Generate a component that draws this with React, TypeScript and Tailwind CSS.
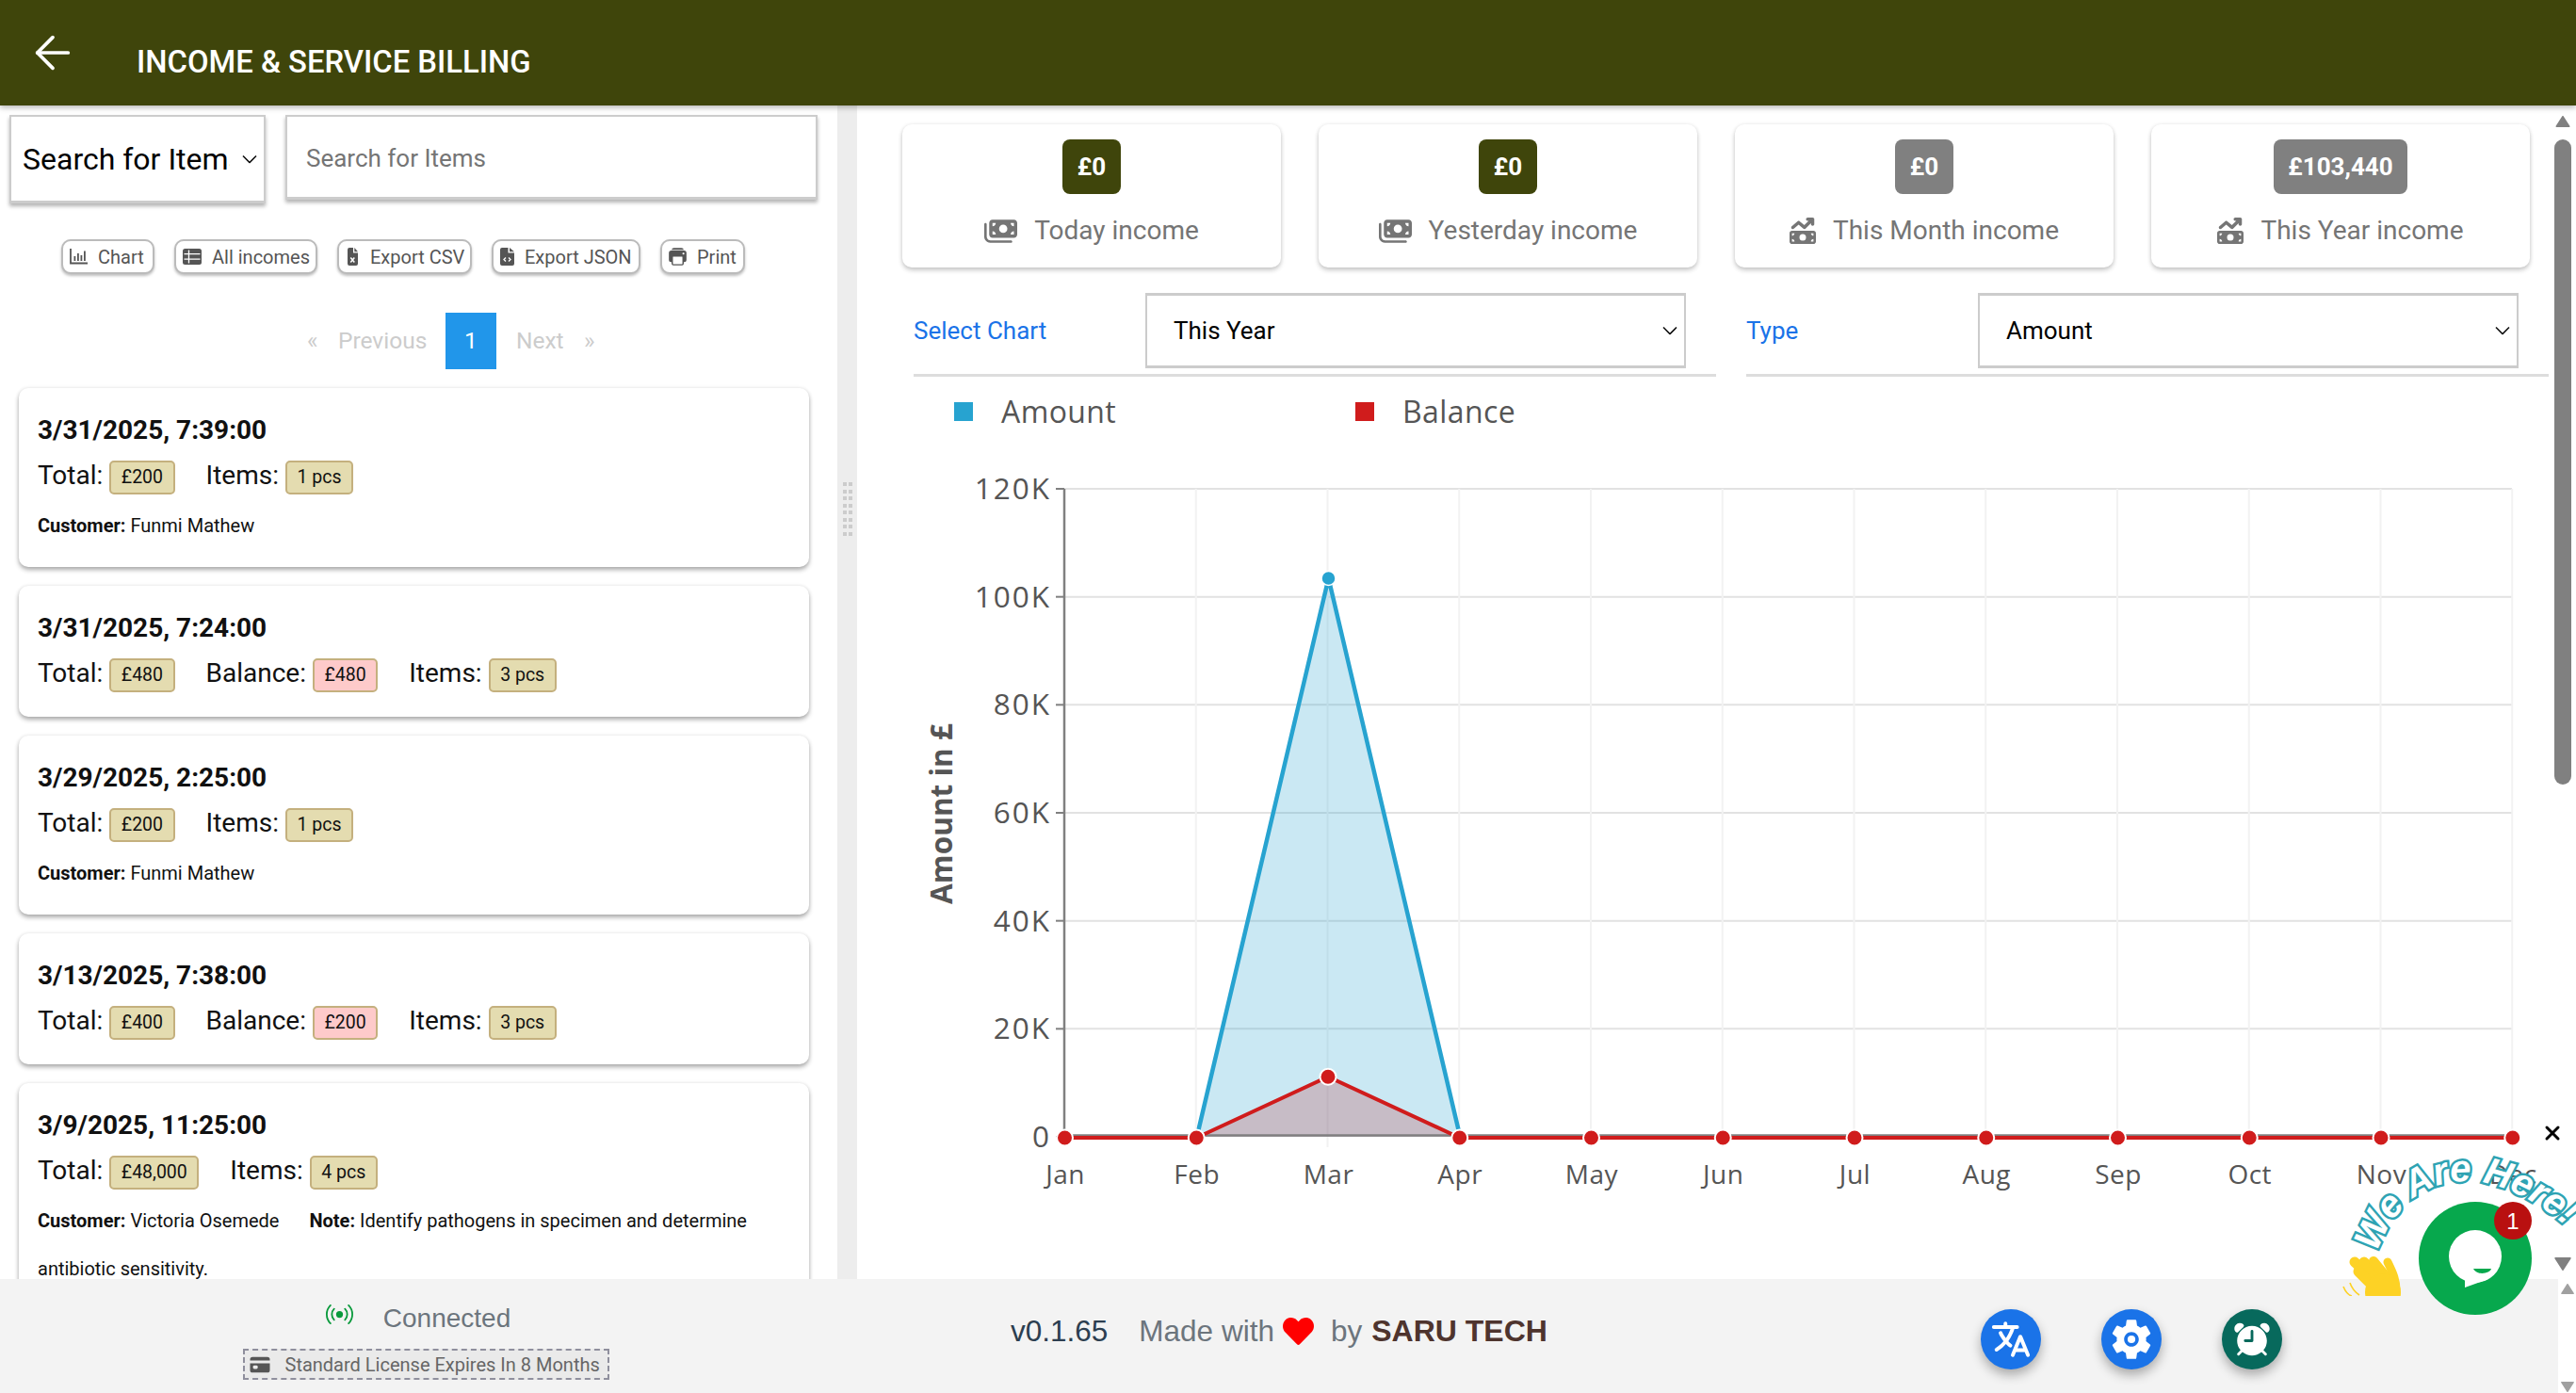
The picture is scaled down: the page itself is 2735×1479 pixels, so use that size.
import React from "react";
import { ArrowLeft, X } from "lucide-react";
import { BsBroadcast } from "react-icons/bs";
import { FaHeart } from "react-icons/fa";
import { FaMoneyBills, FaMoneyBillTrendUp } from "react-icons/fa6";
import { IoCard, IoLanguage, IoAlarm, IoPrint } from "react-icons/io5";

type Rec = {
  date: string;
  total: string;
  balance?: string;
  items: string;
  customer?: string;
  note?: string;
};

const records: Rec[] = [
  { date: "3/31/2025, 7:39:00", total: "£200", items: "1 pcs", customer: "Funmi Mathew" },
  { date: "3/31/2025, 7:24:00", total: "£480", balance: "£480", items: "3 pcs" },
  { date: "3/29/2025, 2:25:00", total: "£200", items: "1 pcs", customer: "Funmi Mathew" },
  { date: "3/13/2025, 7:38:00", total: "£400", balance: "£200", items: "3 pcs" },
  {
    date: "3/9/2025, 11:25:00",
    total: "£48,000",
    items: "4 pcs",
    customer: "Victoria Osemede",
    note: "Identify pathogens in specimen and determine antibiotic sensitivity.",
  },
];

function ChartIcon() {
  return (
    <svg width={19} height={17} viewBox="0 0 19 17" fill="currentColor">
      <path d="M1 0v15.5h18" fill="none" stroke="currentColor" strokeWidth={1.8} />
      <rect x={4.5} y={8} width={1.8} height={5} />
      <rect x={8} y={5} width={1.8} height={8} />
      <rect x={11.5} y={7} width={1.8} height={6} />
      <rect x={15} y={2.5} width={1.8} height={10.5} />
    </svg>
  );
}

function TableIcon() {
  return (
    <svg width={20} height={17} viewBox="0 0 20 17">
      <rect width={20} height={17} rx={2.5} fill="currentColor" />
      <path d="M1.5 5.7h17M1.5 11.2h17M6.5 1.5v14" stroke="#fff" strokeWidth={1.3} fill="none" />
    </svg>
  );
}

function FileIcon({ code }: { code?: boolean }) {
  return (
    <svg width={15} height={19} viewBox="0 0 15 19">
      <path
        d={
          code
            ? "M2 0h6.5v5.5H15V17a2 2 0 0 1-2 2H2a2 2 0 0 1-2-2V2a2 2 0 0 1 2-2zM10 0l5 4.2h-5z"
            : "M3.5 0h4.5v5.5h5V17a2 2 0 0 1-2 2h-7a2 2 0 0 1-2-2V2a2 2 0 0 1 2-2zM9.3 0l3.7 4.2H9.3z"
        }
        fill="currentColor"
      />
      {code ? (
        <path d="M6 10.5l-2 2 2 2M9 10.5l2 2-2 2" fill="none" stroke="#fff" strokeWidth={1.3} />
      ) : (
        <path d="M5.3 10.5l4 5M9.3 10.5l-4 5" fill="none" stroke="#fff" strokeWidth={1.5} />
      )}
    </svg>
  );
}

const actions = [
  { label: "Chart", icon: <ChartIcon />, w: "w-[99px]" },
  { label: "All incomes", icon: <TableIcon />, w: "w-[152px]" },
  { label: "Export CSV", icon: <FileIcon />, w: "w-[143px]" },
  { label: "Export JSON", icon: <FileIcon code />, w: "w-[158px]" },
  { label: "Print", icon: <IoPrint className="-mx-[2px] text-[23px]" />, w: "w-[90px]" },
];

const stats = [
  { value: "£0", label: "Today income", up: false, bg: "bg-[#3f450b]", w: "w-[62px]" },
  { value: "£0", label: "Yesterday income", up: false, bg: "bg-[#3f450b]", w: "w-[62px]" },
  { value: "£0", label: "This Month income", up: true, bg: "bg-[#808080]", w: "w-[62px]" },
  { value: "£103,440", label: "This Year income", up: true, bg: "bg-[#808080]", w: "w-[142px]" },
];

const months = ["Jan", "Feb", "Mar", "Apr", "May", "Jun", "Jul", "Aug", "Sep", "Oct", "Nov", "Dec"];
const X0 = 1130;
const STEP = 139.75;
const Y0 = 1207;
const yAt = (v: number) => Y0 - (v / 120000) * 688;
const xAt = (i: number) => X0 + i * STEP;
const amount = [0, 0, 103440, 0, 0, 0, 0, 0, 0, 0, 0, 0];
const balance = [0, 0, 11300, 0, 0, 0, 0, 0, 0, 0, 0, 0];
const pts = (a: number[]) => a.map((v, i) => `${xAt(i)},${yAt(v)}`).join(" ");

function Chevron() {
  return (
    <svg width={16} height={9} viewBox="0 0 16 9" className="pointer-events-none absolute top-1/2 right-[9px] -translate-y-1/2">
      <path d="M1 1l7 7 7-7" fill="none" stroke="#111" strokeWidth={1.6} />
    </svg>
  );
}

function Badge({ children, pink }: { children: React.ReactNode; pink?: boolean }) {
  return (
    <span
      className={`inline-flex h-[36px] items-center rounded-[5px] border-2 border-[#c4b07e] px-[10.5px] text-[19.5px] text-[#111] ${
        pink ? "bg-[#fecaca]" : "bg-[#e4dcb0]"
      }`}
    >
      {children}
    </span>
  );
}

function Field({ label, children }: { label: string; children: React.ReactNode }) {
  return (
    <div className="flex h-[36px] items-center gap-[7px]">
      <span className="mb-[4px] text-[28px] leading-[36px] text-[#111]">{label}</span>
      {children}
    </div>
  );
}

function RecordCard({ r }: { r: Rec }) {
  return (
    <div
      className={`flex flex-col rounded-[10px] bg-white px-[20px] pt-[29px] shadow-[0_3px_5px_rgba(0,0,0,0.32),0_0_4px_rgba(0,0,0,0.08)] ${
        r.customer ? "pb-[18px]" : "pb-[26px]"
      }`}
    >
      <div className="text-[28px] leading-[32px] font-bold text-[#111]">{r.date}</div>
      <div className="mt-[16px] flex gap-[33px]">
        <Field label="Total:">
          <Badge>{r.total}</Badge>
        </Field>
        {r.balance && (
          <Field label="Balance:">
            <Badge pink>{r.balance}</Badge>
          </Field>
        )}
        <Field label="Items:">
          <Badge>{r.items}</Badge>
        </Field>
      </div>
      {r.customer && (
        <div className="mt-[8px] text-[20px] leading-[51px] text-[#111]">
          <b>Customer:</b> {r.customer}
          {r.note && (
            <>
              <span className="inline-block w-[32px]" />
              <b>Note:</b> {r.note}
            </>
          )}
        </div>
      )}
    </div>
  );
}

function Triangle({ up, w, h, color }: { up: boolean; w: number; h: number; color: string }) {
  return (
    <svg width={w} height={h} viewBox="0 0 10 8">
      <path d={up ? "M5 0.5 L9.5 7.5 L0.5 7.5Z" : "M0.5 0.5 L9.5 0.5 L5 7.5Z"} fill={color} stroke={color} strokeLinejoin="round" />
    </svg>
  );
}

function GearIcon() {
  return (
    <svg width={52} height={52} viewBox="0 0 24 24" fill="#fff">
      <path d="M19.14 12.94c.04-.3.06-.61.06-.94 0-.32-.02-.64-.07-.94l2.03-1.58c.18-.14.23-.41.12-.61l-1.92-3.32c-.12-.22-.37-.29-.59-.22l-2.39.96c-.5-.38-1.03-.7-1.62-.94l-.36-2.54c-.04-.24-.24-.41-.48-.41h-3.84c-.24 0-.43.17-.47.41l-.36 2.54c-.59.24-1.13.57-1.62.94l-2.39-.96c-.22-.08-.47 0-.59.22L2.74 8.87c-.12.21-.08.47.12.61l2.03 1.58c-.05.3-.09.63-.09.94s.02.64.07.94l-2.03 1.58c-.18.14-.23.41-.12.61l1.92 3.32c.12.22.37.29.59.22l2.39-.96c.5.38 1.03.7 1.62.94l.36 2.54c.05.24.24.41.48.41h3.84c.24 0 .44-.17.47-.41l.36-2.54c.59-.24 1.13-.56 1.62-.94l2.39.96c.22.08.47 0 .59-.22l1.92-3.32c.12-.22.07-.47-.12-.61l-2.01-1.58zM12 15.6c-1.98 0-3.6-1.62-3.6-3.6s1.62-3.6 3.6-3.6 3.6 1.62 3.6 3.6-1.62 3.6-3.6 3.6z" />
      <circle cx={12} cy={12} r={1.9} />
    </svg>
  );
}

function Chart() {
  return (
    <svg viewBox="958 470 1753 830" width={1753} height={830} className="block font-['Open_Sans',sans-serif]">
      {[0, 20000, 40000, 60000, 80000, 100000, 120000].map((v) => (
        <g key={v}>
          {v > 0 && <line x1={X0} x2={2667} y1={yAt(v)} y2={yAt(v)} stroke="#e2e2e2" strokeWidth={2} />}
          <line x1={X0 - 9} x2={X0} y1={yAt(v)} y2={yAt(v)} stroke="#808080" strokeWidth={2} />
          <text x={1116} y={yAt(v) + 11} textAnchor="end" fontSize={31.5} fill="#555" letterSpacing={2}>
            {v === 0 ? "0" : `${v / 1000}K`}
          </text>
        </g>
      ))}
      {months.map((m, i) => (
        <g key={m}>
          {i > 0 && <line x1={xAt(i)} x2={xAt(i)} y1={519} y2={1218} stroke="#f2f2f2" strokeWidth={2} />}
          <text x={xAt(i) + 1} y={1257} textAnchor="middle" fontSize={28} fill="#555" letterSpacing={0.5}>
            {m}
          </text>
        </g>
      ))}
      <polygon points={pts(amount)} fill="rgba(42,163,208,0.25)" />
      <polygon points={pts(balance)} fill="rgba(190,30,40,0.22)" />
      <line x1={X0} x2={X0} y1={519} y2={1207} stroke="#808080" strokeWidth={2.5} />
      <line x1={X0} x2={2667} y1={1205.5} y2={1205.5} stroke="#808080" strokeWidth={2.5} />
      <polyline
        points={[1, 2, 3].map((i) => `${xAt(i) + 1},${yAt(amount[i])}`).join(" ")}
        fill="none"
        stroke="#27a3d0"
        strokeWidth={4.5}
      />
      <circle cx={xAt(2) + 1} cy={yAt(103440)} r={7.5} fill="#27a3d0" stroke="#fff" strokeWidth={1.5} />
      <polyline points={balance.map((v, i) => `${xAt(i) + 0.5},${yAt(v) + 1}`).join(" ")} fill="none" stroke="#d01c1c" strokeWidth={4} />
      {balance.map((v, i) => (
        <circle key={i} cx={xAt(i) + 0.5} cy={yAt(v) + 1} r={8.5} fill="#d01c1c" stroke="#fff" strokeWidth={2} />
      ))}
      <text
        transform="translate(1011 864) rotate(-90)"
        textAnchor="middle"
        fontSize={31.5}
        fontWeight={700}
        fill="#555"
      >
        Amount in £
      </text>
    </svg>
  );
}

function ChatWidget() {
  return (
    <div className="pointer-events-none absolute left-[2480px] top-[1185px] h-[220px] w-[255px]">
      <svg viewBox="2480 1185 255 220" width={255} height={220} className="block">
        <defs>
          <path id="arc" d="M2524 1330 C 2545 1262, 2625 1205, 2745 1320" fill="none" />
          <clipPath id="handclip">
            <rect x={2480} y={1330} width={80} height={46} />
          </clipPath>
        </defs>
        <text
          fontFamily="'Liberation Sans', sans-serif"
          fontWeight={700}
          fontStyle="italic"
          fontSize={40}
          fill="#fff"
          stroke="#2ea3b3"
          strokeWidth={5}
          paintOrder="stroke"
        >
          <textPath href="#arc">We Are Here!</textPath>
        </text>
        <g clipPath="url(#handclip)">
          <g stroke="#fdd225" strokeLinecap="round" fill="none">
            <path d="M2500 1340 L2535 1372" strokeWidth={11} />
            <path d="M2504 1350 L2530 1376" strokeWidth={11} />
            <path d="M2510 1340 L2537 1368" strokeWidth={11} />
            <path d="M2520 1339 L2542 1366" strokeWidth={10} />
            <path d="M2535 1340 C 2540 1350, 2545 1360, 2544 1374" strokeWidth={9} />
          </g>
          <ellipse cx={2530} cy={1372} rx={19} ry={20} fill="#fdd225" />
          <path d="M2495 1362 C 2497 1368, 2502 1373, 2505 1375" fill="none" stroke="#fdd225" strokeWidth={1.6} />
          <path d="M2488 1366 C 2490 1371, 2493 1375, 2497 1376" fill="none" stroke="#fdd225" strokeWidth={1.6} />
        </g>
        <circle cx={2628} cy={1336} r={60} fill="#07a84d" />
        <ellipse cx={2628} cy={1334} rx={28} ry={28} fill="#fff" />
        <path d="M2617 1354 L2617 1367 L2642 1358Z" fill="#fff" />
        <path d="M2626 1347 L2645 1347 C 2644 1352, 2630 1355, 2626 1347Z" fill="#07a84d" />
        <circle cx={2668} cy={1296} r={20} fill="#b91010" />
        <text x={2668} y={1305} textAnchor="middle" fontSize={24} fill="#fff" fontFamily="'Liberation Sans', sans-serif">
          1
        </text>
      </svg>
      <X className="absolute left-[218px] top-[6px] text-black" size={24} strokeWidth={3} />
    </div>
  );
}

export default function App() {
  return (
    <div className="relative flex h-[1479px] w-[2735px] flex-col overflow-hidden bg-white font-['Roboto',sans-serif]">
      <header className="relative z-10 flex h-[112px] shrink-0 items-start bg-[#3f450b] shadow-[0_2px_6px_rgba(0,0,0,0.3)]">
        <ArrowLeft className="ml-[28px] mt-[28px] text-white" size={56} strokeWidth={1.6} />
        <h1 className="ml-[61px] mt-[46px] text-[32.8px] leading-[40px] font-medium text-white">
          INCOME &amp; SERVICE BILLING
        </h1>
      </header>

      <div className="flex min-h-0 flex-1">
        {/* Left panel */}
        <aside className="flex w-[889px] shrink-0 flex-col overflow-hidden">
          <div className="mt-[10px] flex items-start gap-[21px] pl-[10px]">
            <div className="relative h-[94px] w-[272px] shrink-0">
              <select className="h-full w-full appearance-none border-2 border-b-[3px] border-[#ccc] bg-white pr-[36px] pl-[12px] text-[32px] text-black shadow-[0_3px_4px_rgba(0,0,0,0.3)]">
                <option>Search for Items</option>
              </select>
              <Chevron />
            </div>
            <input
              placeholder="Search for Items"
              className="h-[90px] w-[565px] border-2 border-b-[3px] border-[#ccc] bg-white px-[20px] pt-[2px] text-[26px] shadow-[0_3px_4px_rgba(0,0,0,0.3)] placeholder:text-[#757575]"
            />
          </div>

          <div className="mt-[38px] flex gap-[21px] pl-[65px]">
            {actions.map((a) => (
              <button
                key={a.label}
                className={`flex h-[37px] items-center gap-[11px] rounded-[10px] border-2 border-[#bbb] bg-white pl-[7px] text-[20px] text-[#555] shadow-[0_2px_3px_rgba(0,0,0,0.25)] ${a.w}`}
              >
                {a.icon}
                {a.label}
              </button>
            ))}
          </div>

          <div className="mt-[41px] flex h-[60px] items-center pl-[326px] text-[24.5px] text-[#ccc]">
            <span className="w-[33px]">«</span>
            <span className="w-[114px]">Previous</span>
            <span className="flex h-[60px] w-[54px] items-center justify-center bg-[#2196ea] text-white">1</span>
            <span className="ml-[21px] w-[72px]">Next</span>
            <span>»</span>
          </div>

          <div className="mt-[20px] ml-[20px] flex w-[839px] flex-col gap-[20px]">
            {records.map((r) => (
              <RecordCard key={r.date} r={r} />
            ))}
          </div>
        </aside>

        {/* Gutter */}
        <div className="flex w-[21px] shrink-0 items-start justify-center bg-[#ededed] pt-[400px]">
          <div className="grid grid-cols-2 gap-x-[2px] gap-y-[3.5px]">
            {Array.from({ length: 16 }).map((_, i) => (
              <span key={i} className="h-[4px] w-[4px] bg-[#ccc]" />
            ))}
          </div>
        </div>

        {/* Right panel */}
        <main className="flex min-w-0 flex-1">
          <div className="min-w-0 flex-1 overflow-hidden pl-[48px]">
            <div className="mt-[20px] grid w-[1728px] grid-cols-4 gap-[40px]">
              {stats.map((s) => (
                <div
                  key={s.label}
                  className="flex h-[152px] flex-col items-center rounded-[10px] bg-white pt-[16px] shadow-[0_3px_5px_rgba(0,0,0,0.2),0_0_4px_rgba(0,0,0,0.08)]"
                >
                  <span
                    className={`flex h-[58px] items-center justify-center rounded-[8px] text-[26px] font-bold text-white ${s.bg} ${s.w}`}
                  >
                    {s.value}
                  </span>
                  <div className="mt-[21px] flex h-[36px] items-center gap-[18px] text-[28px] text-[#757575]">
                    {s.up ? (
                      <FaMoneyBillTrendUp className="text-[28px]" />
                    ) : (
                      <FaMoneyBills className="text-[35px]" />
                    )}
                    {s.label}
                  </div>
                </div>
              ))}
            </div>

            <div className="mt-[27px] ml-[12px] grid w-[1736px] grid-cols-2 gap-[32px]">
              {[
                { label: "Select Chart", value: "This Year" },
                { label: "Type", value: "Amount" },
              ].map((f) => (
                <div key={f.label} className="flex h-[89px] border-b-[3px] border-[#ddd]">
                  <label className="w-[246px] pt-[22px] text-[26px] leading-[36px] text-[#1a73e8]">{f.label}</label>
                  <div className="relative h-[80px] w-[574px]">
                    <select className="h-full w-full appearance-none border-2 border-t-[3px] border-b-[3px] border-[#ccc] bg-white pl-[28px] text-[26px] text-black">
                      <option>{f.value}</option>
                    </select>
                    <Chevron />
                  </div>
                </div>
              ))}
            </div>

            <div className="ml-[55px] mt-[17px] flex h-[40px] items-center font-['Open_Sans',sans-serif] text-[32px] tracking-[0.4px] text-[#555]">
              <span className="h-[20px] w-[20px] bg-[#27a3d0]" />
              <span className="ml-[30px] w-[376px]">Amount</span>
              <span className="h-[20px] w-[20px] bg-[#d01c1c]" />
              <span className="ml-[30px]">Balance</span>
            </div>

            <div className="mt-[13px]">
              <Chart />
            </div>
          </div>

          <div className="flex w-[24px] shrink-0 flex-col items-center pr-[5px] pt-[11px] pb-[9px]">
            <Triangle up w={16} h={12} color="#808080" />
            <div className="mt-[13px] h-[685px] w-[18px] rounded-t-[9px] rounded-b-[9px] bg-[#808080]" />
            <div className="flex-1" />
            <Triangle up={false} w={18} h={14} color="#808080" />
          </div>
        </main>
      </div>

      {/* Footer */}
      <footer className="flex h-[121px] shrink-0">
        <div className="flex flex-1 bg-[#f3f3f3]">
          <div className="flex w-[904px] shrink-0 flex-col items-center pt-[26px] font-['Liberation_Sans',sans-serif]">
            <div className="mr-[16px] flex h-[32px] items-center gap-[32px] text-[28px] text-[#6c757d]">
              <BsBroadcast className="mb-[10px] text-[29px] text-[#0a9a3c]" />
              Connected
            </div>
            <div className="mt-[16px] flex h-[33px] w-[389px] items-center gap-[15px] border-2 border-dashed border-[#8f8f9d] bg-[#eaeaea] pl-[4px] text-[#666]">
              <IoCard className="shrink-0 text-[24px] text-[#555]" />
              <span className="whitespace-nowrap font-['Roboto',sans-serif] text-[20px]">
                Standard License Expires In 8 Months
              </span>
            </div>
          </div>
          <div className="flex w-[1199px] shrink-0 items-start pl-[169px] pt-[35px] font-['Liberation_Sans',sans-serif] text-[31.5px] leading-[40px]">
            <span className="text-[#2c3e50]">v0.1.65</span>
            <span className="ml-[33px] text-[#6c757d]">Made with</span>
            <FaHeart className="ml-[9px] mt-[4px] text-[33px] text-[#ff0000]" />
            <span className="ml-[18px] text-[#6c757d]">by</span>
            <b className="ml-[10px] text-[32px] text-[#4e342e]">SARU TECH</b>
          </div>
          <div className="flex items-start gap-[64px] pt-[32px]">
            <span className="flex h-[64px] w-[64px] items-center justify-center rounded-full bg-[#1a73e8] text-[46px] text-white shadow-[0_6px_12px_rgba(0,0,0,0.3)]">
              <IoLanguage />
            </span>
            <span className="flex h-[64px] w-[64px] items-center justify-center rounded-full bg-[#1a73e8] text-white shadow-[0_6px_12px_rgba(0,0,0,0.3)]">
              <GearIcon />
            </span>
            <span className="flex h-[64px] w-[64px] items-center justify-center rounded-full bg-[#07695c] text-[46px] text-white shadow-[0_6px_12px_rgba(0,0,0,0.3)]">
              <IoAlarm />
            </span>
          </div>
        </div>
        <div className="flex w-[19px] shrink-0 flex-col items-center justify-between bg-white pt-[5px] pb-[1px]">
          <Triangle up w={14} h={11} color="#a0a0a0" />
          <Triangle up={false} w={14} h={11} color="#a0a0a0" />
        </div>
      </footer>

      <ChatWidget />
    </div>
  );
}
